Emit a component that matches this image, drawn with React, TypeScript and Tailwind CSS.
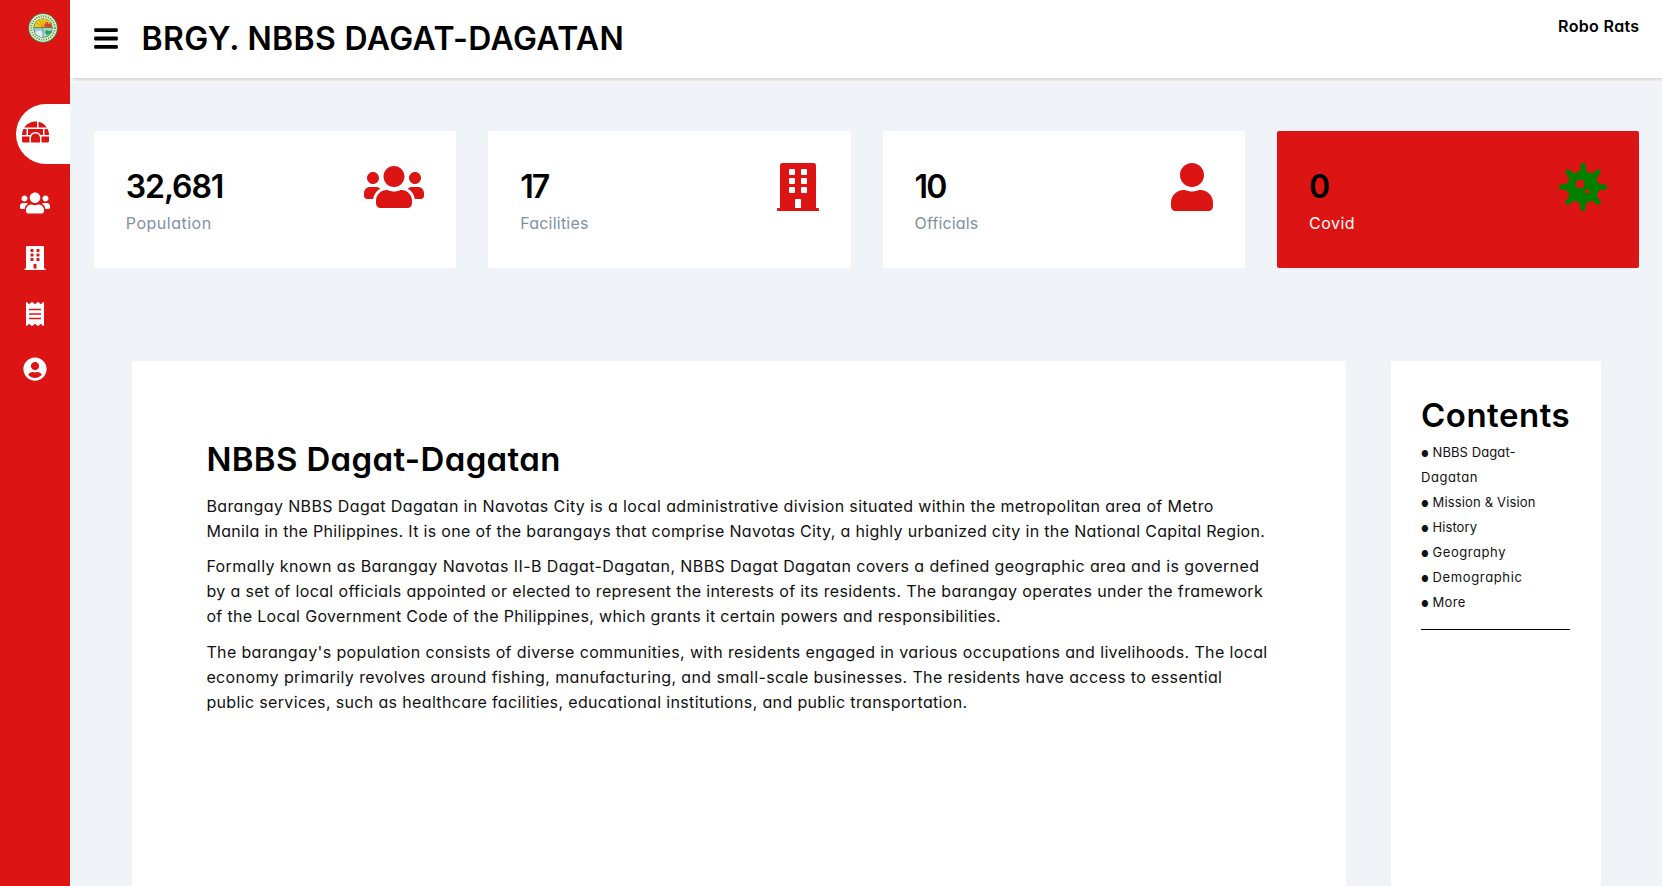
import type { ReactNode } from "react";
import {
  FaBars,
  FaBuilding,
  FaIgloo,
  FaReceipt,
  FaUser,
  FaUserCircle,
  FaUsers,
  FaVirus,
} from "react-icons/fa";

function Seal() {
  return (
    <svg viewBox="0 0 60 60" className="size-[30px]" aria-hidden="true">
      <circle cx="30" cy="30" r="29.5" fill="#3f8a3c" />
      <circle cx="30" cy="30" r="27.8" fill="#e3f3d3" />
      <circle
        cx="30"
        cy="30"
        r="23.5"
        fill="none"
        stroke="#5d8d58"
        strokeWidth="4"
        strokeDasharray="2.2 2.6"
      />
      <circle cx="30" cy="30" r="19.5" fill="#3d8a4a" />
      <path d="M12 29a18 18 0 0 1 36 0z" fill="#f2c61c" />
      <path
        d="M30 29 16 19M30 29 22 13M30 29 30 11M30 29 38 13"
        stroke="#c99a10"
        strokeWidth="1.6"
      />
      <path d="M33 29v-8h4v-3h3v3h7l1 8z" fill="#d2452b" />
      <path d="M12 30h18v18A18 18 0 0 1 12 30z" fill="#9cc9e6" />
      <path d="M30 30h18a18 18 0 0 1-18 18z" fill="#a8dbe0" />
      <path d="M14 38q8-5 16 0v10a18 18 0 0 1-16-10z" fill="#dcecf4" />
      <path d="M33 37l5-3 5 2 4-1-3 6-6 3-3-3z" fill="#2fa348" />
      <path d="M12 29.5h36M30 30v18" stroke="#4d6b4c" strokeWidth="1.2" />
    </svg>
  );
}

function Line({ className, children }: { className: string; children: ReactNode }) {
  return <span className={`block whitespace-nowrap ${className}`}>{children}</span>;
}

function Card({
  value,
  valueClass,
  label,
  labelClass,
  icon,
  className,
}: {
  value: string;
  valueClass: string;
  label: string;
  labelClass: string;
  icon: ReactNode;
  className: string;
}) {
  return (
    <div className={`flex h-[137px] justify-between rounded-[2px] p-8 ${className}`}>
      <div>
        <h2 className={`text-[32px] leading-[48px] font-semibold text-black ${valueClass}`}>
          {value}
        </h2>
        <span className={`block text-base leading-6 ${labelClass}`}>{label}</span>
      </div>
      {icon}
    </div>
  );
}

const contents = [
  { label: "Mission & Vision", tracking: "tracking-[0.16px]" },
  { label: "History", tracking: "tracking-[0.07px]" },
  { label: "Geography", tracking: "tracking-[0.56px]" },
  { label: "Demographic", tracking: "tracking-[0.64px]" },
  { label: "More", tracking: "tracking-[0.3px]" },
];

function Bullet() {
  return (
    <span className="inline-block h-2 w-[11.5px] align-baseline text-[8.5px] leading-[8px] tracking-normal">
      ●
    </span>
  );
}

export default function App() {
  return (
    <div className="flex h-[886px] w-full overflow-hidden bg-[#f0f3f8] font-['Inter','Open_Sans',sans-serif] text-black [font-feature-settings:'cv11']">
      <aside className="flex w-[70px] shrink-0 flex-col bg-[#dd1414] text-white">
        <div className="flex h-[104px] justify-center pt-[13px] pl-4">
          <Seal />
        </div>
        <nav className="flex flex-col">
          <a className="ml-4 flex h-[60px] rounded-l-[30px] bg-white pt-4 pl-[5.5px] text-[#dd1414]">
            <FaIgloo className="h-6 w-[27px]" />
          </a>
          <a className="mt-[27px] flex h-6 justify-center">
            <FaUsers className="h-6 w-[30px]" />
          </a>
          <a className="mt-[31px] flex h-6 justify-center">
            <FaBuilding className="size-6" />
          </a>
          <a className="mt-8 flex h-6 justify-center">
            <FaReceipt className="size-6" />
          </a>
          <a className="mt-[31px] flex h-6 justify-center">
            <FaUserCircle className="size-6" />
          </a>
        </nav>
      </aside>

      <div className="flex min-w-0 flex-1 flex-col">
        <div className="h-[83px] shrink-0 overflow-hidden bg-white">
          <header className="flex h-[78px] items-start bg-white pr-[22.5px] pl-6 shadow-[2px_2px_5px_rgba(0,0,0,0.2)]">
            <FaBars className="mt-[25px] h-[27px] w-6" />
            <h1 className="mt-[15px] ml-[23.5px] text-[32px] leading-[48px] font-semibold tracking-[0.36px]">
              BRGY. NBBS DAGAT-DAGATAN
            </h1>
            <h4 className="mt-[14px] ml-auto leading-6 font-semibold tracking-[0.35px]">
              Robo Rats
            </h4>
          </header>
        </div>

        <main className="flex flex-1 flex-col pt-12 pr-[22.6px] pl-[23.8px]">
          <div className="grid grid-cols-4 gap-8">
            <Card
              value="32,681"
              valueClass="tracking-[-1.1px]"
              label="Population"
              labelClass="tracking-[0.5px] text-[#8390a2]"
              className="bg-white"
              icon={<FaUsers className="h-12 w-[60px] text-[#dd1414]" />}
            />
            <Card
              value="17"
              valueClass="tracking-[-1.9px]"
              label="Facilities"
              labelClass="tracking-[0.22px] text-[#8390a2]"
              className="bg-white"
              icon={<FaBuilding className="h-12 w-[42px] text-[#dd1414]" />}
            />
            <Card
              value="10"
              valueClass="tracking-[-1.8px]"
              label="Officials"
              labelClass="tracking-[0.15px] text-[#8390a2]"
              className="bg-white"
              icon={<FaUser className="h-12 w-[42px] text-[#dd1414]" />}
            />
            <Card
              value="0"
              valueClass="tracking-normal"
              label="Covid"
              labelClass="tracking-[0.5px] text-white"
              className="bg-[#dd1414]"
              icon={<FaVirus className="size-12 text-[#008000]" />}
            />
          </div>

          <div className="mt-[93px] flex flex-1 justify-between pr-[38.4px] pl-[38.2px]">
            <article className="w-[1214px] bg-white pt-[74px] pl-[74.4px]">
              <h2 className="text-[33px] leading-[48px] font-semibold tracking-[0.34px]">
                NBBS Dagat-Dagatan
              </h2>
              <div className="mt-[11px] flex flex-col gap-2.5 leading-[25px] text-[#111]">
                <p>
                  <Line className="tracking-[0.38px]">
                    Barangay NBBS Dagat Dagatan in Navotas City is a local administrative division
                    situated within the metropolitan area of Metro
                  </Line>
                  <Line className="tracking-[0.324px]">
                    Manila in the Philippines. It is one of the barangays that comprise Navotas
                    City, a highly urbanized city in the National Capital Region.
                  </Line>
                </p>
                <p>
                  <Line className="tracking-[0.399px]">
                    Formally known as Barangay Navotas II-B Dagat-Dagatan, NBBS Dagat Dagatan covers
                    a defined geographic area and is governed
                  </Line>
                  <Line className="tracking-[0.362px]">
                    by a set of local officials appointed or elected to represent the interests of
                    its residents. The barangay operates under the framework
                  </Line>
                  <Line className="tracking-[0.33px]">
                    of the Local Government Code of the Philippines, which grants it certain powers
                    and responsibilities.
                  </Line>
                </p>
                <p className="mt-px">
                  <Line className="tracking-[0.364px]">
                    The barangay's population consists of diverse communities, with residents
                    engaged in various occupations and livelihoods. The local
                  </Line>
                  <Line className="tracking-[0.39px]">
                    economy primarily revolves around fishing, manufacturing, and small-scale
                    businesses. The residents have access to essential
                  </Line>
                  <Line className="tracking-[0.35px]">
                    public services, such as healthcare facilities, educational institutions, and
                    public transportation.
                  </Line>
                </p>
              </div>
            </article>

            <aside className="w-[210px] bg-white px-[30px] pt-[29.5px]">
              <h2 className="text-[33px] leading-[48px] font-semibold tracking-[0.5px]">
                Contents
              </h2>
              <ul className="mt-[1.5px] text-[13px] leading-[25px] text-[#111]">
                <li>
                  <Line className="tracking-[0.09px]">
                    <Bullet />
                    NBBS Dagat-
                  </Line>
                  <Line className="tracking-[0.57px]">Dagatan</Line>
                </li>
                {contents.map((item) => (
                  <li key={item.label} className={item.tracking}>
                    <Bullet />
                    {item.label}
                  </li>
                ))}
              </ul>
              <hr className="mt-[14px] mr-px border-black" />
            </aside>
          </div>
        </main>
      </div>
    </div>
  );
}
